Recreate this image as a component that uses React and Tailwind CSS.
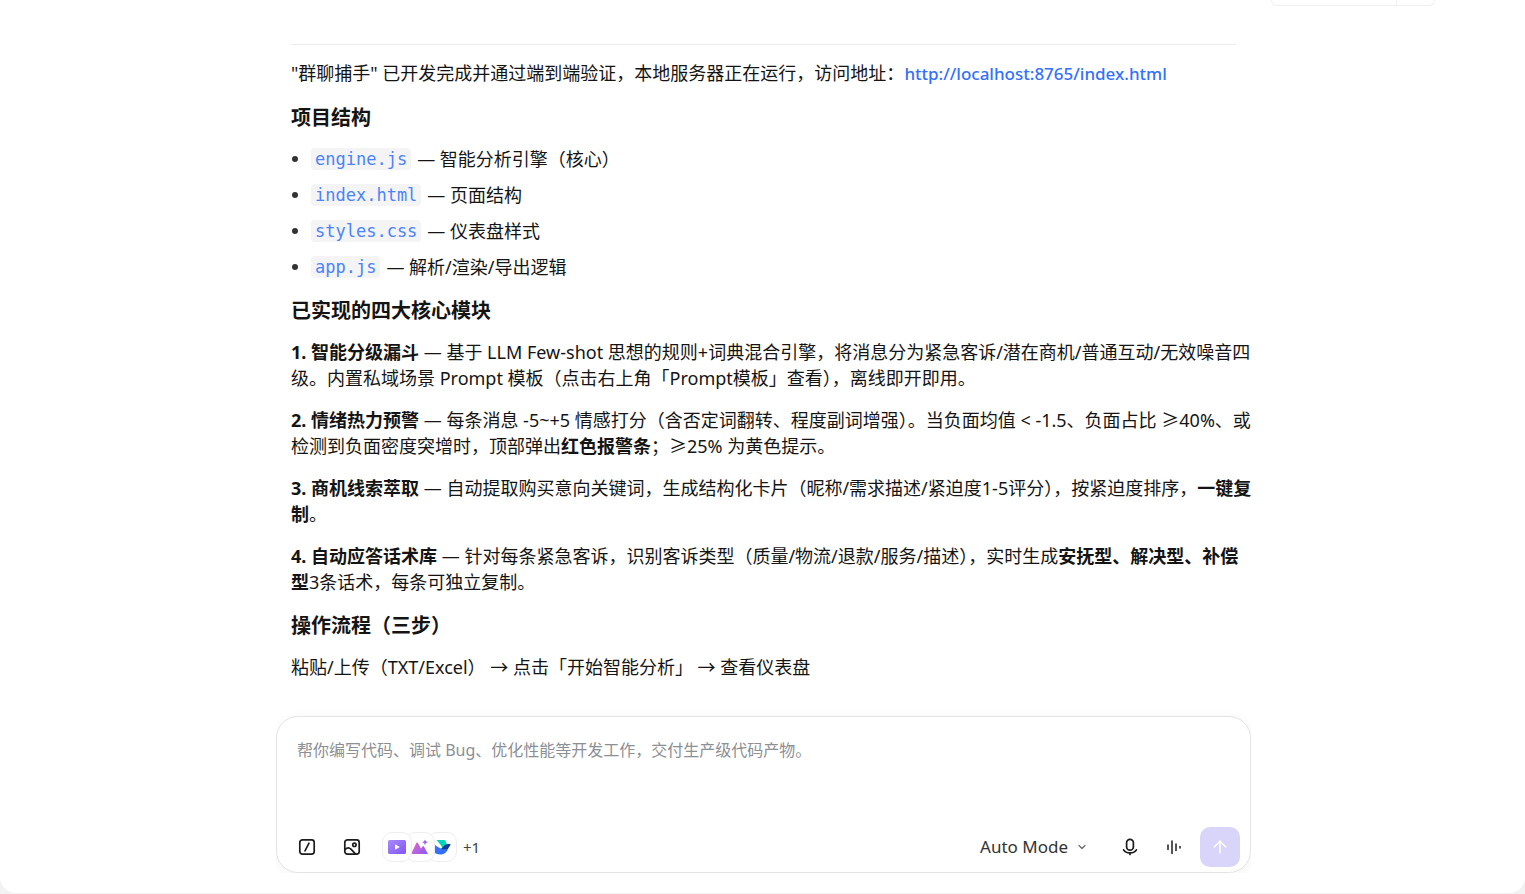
import { useState } from "react";
import { ArrowUp, ChevronDown } from "lucide-react";

const files = [
  { name: "engine.js", desc: "智能分析引擎（核心）" },
  { name: "index.html", desc: "页面结构" },
  { name: "styles.css", desc: "仪表盘样式" },
  { name: "app.js", desc: "解析/渲染/导出逻辑" },
];

function SlashIcon() {
  return (
    <svg viewBox="0 0 18 18" className="w-[18px] h-[18px]" fill="none" stroke="currentColor" strokeWidth="1.7" strokeLinecap="round">
      <rect x="1.8" y="1.8" width="14.4" height="14.4" rx="2.6" />
      <path d="M11 5.2 7 12.8" />
    </svg>
  );
}

function ImageIcon() {
  return (
    <svg viewBox="0 0 18 18" className="w-[18px] h-[18px]" fill="none" stroke="currentColor" strokeWidth="1.7" strokeLinecap="round">
      <rect x="1.8" y="1.8" width="14.4" height="14.4" rx="2.6" />
      <circle cx="11.4" cy="6.8" r="1.7" />
      <path d="M2.2 11.4C4.4 9.2 6.4 9.6 8.2 11.3L12.4 15.8" />
    </svg>
  );
}

function MicIcon() {
  return (
    <svg viewBox="0 0 18 18" className="w-[18px] h-[18px]" fill="none" stroke="currentColor" strokeWidth="1.7" strokeLinecap="round">
      <rect x="5.6" y="1.4" width="6.8" height="10.8" rx="3.4" />
      <path d="M2.6 11.8C4.8 15.8 13.2 15.8 15.4 11.8M9 14.8V16.4" />
    </svg>
  );
}

function VoiceIcon() {
  return (
    <svg viewBox="0 0 18 18" className="w-[18px] h-[18px]" fill="none" stroke="currentColor" strokeWidth="1.5" strokeLinecap="round">
      <path d="M3 7v4.6M7 3v12.6M11 6v6.6M15 8.6v1.4" />
    </svg>
  );
}

function VideoBadge() {
  return (
    <svg viewBox="0 0 18 16" className="w-[18px] h-4">
      <defs>
        <linearGradient id="video" x1="0" y1="0" x2="1" y2="1">
          <stop offset="0" stopColor="#a98bfb" />
          <stop offset="1" stopColor="#8255f0" />
        </linearGradient>
      </defs>
      <rect y="1" width="18" height="14" rx="1.6" fill="url(#video)" />
      <path d="M7 5.2v5.6l4.8-2.8z" fill="#fff" />
    </svg>
  );
}

function PeaksBadge() {
  return (
    <svg viewBox="0 0 18 16" className="w-[18px] h-4">
      <defs>
        <linearGradient id="peaks" x1="0" y1="0.2" x2="1" y2="0.8">
          <stop offset="0" stopColor="#dc68c8" />
          <stop offset="1" stopColor="#8b5cf6" />
        </linearGradient>
      </defs>
      <path d="M1 15V13L5.6 3.6h1L10 9.4 12 7l.8.2L17 15z" fill="url(#peaks)" />
      <path d="M14 .4 14.9 2.3 17 3.2 14.9 4.1 14 6.2 13.1 4.1 11 3.2 13.1 2.3z" fill="#9b5ff0" />
    </svg>
  );
}

function BirdBadge() {
  return (
    <svg viewBox="0 0 18 16" className="w-[18px] h-4">
      <path d="M3.4 1h8.2c1.4 1.6 2.2 3.2 2.4 5L9.4 9C7.8 6 5.8 3.2 3.4 1z" fill="#00d6b9" />
      <path d="M.6 4.6C4 8.2 8 10.4 12.6 10.8c1 0 2-.6 2.8-1.6C13.8 13.4 11 15.6 7.4 15.6 4.4 15.6 2.2 14.6.6 12.8z" fill="#3370ff" />
      <path d="M17.8 5.4c-3.6-1-6.2.2-8.4 3-.6.8-1.2 1.2-2 1.2 2.2 1 4 1.4 5.6 1.2 2.4-.2 3.2-3.4 4.8-5.4z" fill="#133c9a" />
    </svg>
  );
}

function Badge({ children, className = "" }) {
  return (
    <span className={`relative flex size-[30px] items-center justify-center rounded-[10px] border border-[#eeeeee] bg-white ${className}`}>
      {children}
    </span>
  );
}

function Heading({ children }) {
  return <h3 className="mt-4 mb-[13px] text-xl leading-[30px] font-bold">{children}</h3>;
}

function Answer() {
  return (
    <article className="mx-auto w-full max-w-[975px] px-[15px] text-lg leading-[26px] text-[#141414]">
      <hr className="mb-[15px] border-[#ececec]" />
      <p>
        "群聊捕手" 已开发完成并通过端到端验证，本地服务器正在运行，访问地址：
        <a href="http://localhost:8765/index.html" className="text-[17px] font-medium text-[#3370ff]">
          http://localhost:8765/index.html
        </a>
      </p>

      <Heading>项目结构</Heading>
      <ul className="flex flex-col gap-[10px]">
        {files.map((file) => (
          <li key={file.name} className="flex items-center">
            <span className="mr-[13px] ml-px size-1.5 rounded-full bg-[#333333]" />
            <code className="mr-1.5 rounded bg-[#f4f4f5] px-1 font-['DejaVu_Sans_Mono',monospace] text-[17px] leading-[22px] text-[#4a83ff]">
              {file.name}
            </code>
            <span>— {file.desc}</span>
          </li>
        ))}
      </ul>

      <Heading>已实现的四大核心模块</Heading>
      <div className="-mr-[18px] flex flex-col gap-4">
        <p>
          <b>1. 智能分级漏斗</b> — 基于 LLM Few-shot 思想的规则+词典混合引擎，将消息分为紧急客诉/潜在商机/普通互动/无效噪音四级。内置私域场景 Prompt 模板（点击右上角「Prompt模板」查看），离线即开即用。
        </p>
        <p>
          <b>2. 情绪热力预警</b> — 每条消息 -5~+5 情感打分（含否定词翻转、程度副词增强）。当负面均值 &lt; -1.5、负面占比 ≥40%、或检测到负面密度突增时，顶部弹出<b>红色报警条</b>；≥25% 为黄色提示。
        </p>
        <p>
          <b>3. 商机线索萃取</b> — 自动提取购买意向关键词，生成结构化卡片（昵称/需求描述/紧迫度1-5评分），按紧迫度排序，<b>一键复制</b>。
        </p>
        <p>
          <b>4. 自动应答话术库</b> — 针对每条紧急客诉，识别客诉类型（质量/物流/退款/服务/描述），实时生成<b>安抚型、解决型、补偿型</b>3条话术，每条可独立复制。
        </p>
      </div>

      <Heading>操作流程（三步）</Heading>
      <p>粘贴/上传（TXT/Excel） → 点击「开始智能分析」 → 查看仪表盘</p>
    </article>
  );
}

function Composer() {
  const [text, setText] = useState("");

  return (
    <form
      onSubmit={(e) => e.preventDefault()}
      className="flex flex-col rounded-[22px] border border-[#e4e4e4] bg-white shadow-[0_2px_12px_rgba(0,0,0,0.05)]"
    >
      <textarea
        aria-label="消息"
        rows={3}
        value={text}
        onChange={(e) => setText(e.target.value)}
        placeholder="帮你编写代码、调试 Bug、优化性能等开发工作，交付生产级代码产物。"
        className="mx-5 mt-5 mb-3 resize-none text-base leading-[26px] outline-none placeholder:text-[#8c8f94]"
      />
      <div className="flex items-center pr-[10px] pb-[5px] pl-[21px] text-[#1c1c1c]">
        <button type="button" aria-label="指令">
          <SlashIcon />
        </button>
        <button type="button" aria-label="图片" className="ml-[27px]">
          <ImageIcon />
        </button>
        <button type="button" className="ml-[21px] flex items-center text-[15px] text-[#444444]">
          <Badge className="z-20">
            <VideoBadge />
          </Badge>
          <Badge className="z-10 -ml-[7px]">
            <PeaksBadge />
          </Badge>
          <Badge className="-ml-2">
            <BirdBadge />
          </Badge>
          <span className="ml-1.5">+1</span>
        </button>
        <button type="button" className="ml-auto flex items-center gap-2 text-[17px] text-[#333333]">
          Auto Mode
          <ChevronDown className="size-3 text-[#666666]" strokeWidth={2.4} />
        </button>
        <button type="button" aria-label="语音输入" className="ml-[33px]">
          <MicIcon />
        </button>
        <button type="button" aria-label="语音通话" className="ml-[26px]">
          <VoiceIcon />
        </button>
        <button type="submit" aria-label="发送" className="ml-[17px] flex size-10 items-center justify-center rounded-[10px] bg-[#d8d4fa] text-white">
          <ArrowUp className="size-5" strokeWidth={1.8} />
        </button>
      </div>
    </form>
  );
}

export default function App() {
  return (
    <div className="h-screen bg-[#f2f2f2] pb-px font-['Noto_Sans','Noto_Sans_CJK_SC',sans-serif]">
      <main className="flex h-full flex-col overflow-hidden rounded-b-2xl bg-white pl-0.5">
        <div className="mr-[90px] mb-[38px] flex h-[6px] w-[164px] shrink-0 self-end rounded-b-lg border border-t-0 border-[#f0f0f2]">
          <span className="w-[125px] border-r border-[#f0f0f2]" />
        </div>
        <div className="min-h-0 flex-1 overflow-hidden">
          <Answer />
        </div>
        {/* clips the composer's shadow below and at the sides */}
        <div className="mx-auto mb-5 w-full max-w-[975px] shrink-0 overflow-hidden pt-3">
          <Composer />
        </div>
      </main>
    </div>
  );
}
